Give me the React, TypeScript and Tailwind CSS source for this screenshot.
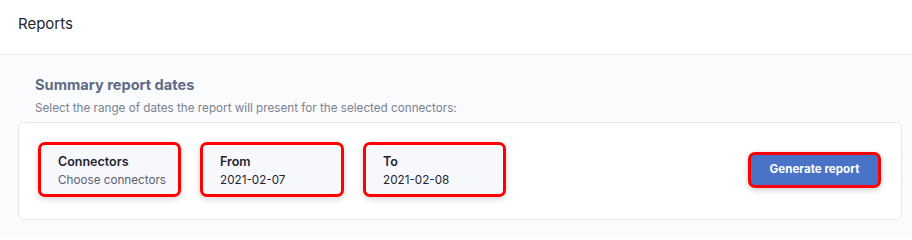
import { useState } from 'react';

const fields = [
  { label: 'Connectors', value: 'Choose connectors', muted: true, width: 'w-[143px]' },
  { label: 'From', value: '2021-02-07', muted: false, width: 'w-[144px]' },
  { label: 'To', value: '2021-02-08', muted: false, width: 'w-[143px]' },
];

export default function App() {
  const [fromDate] = useState('2021-02-07');

  return (
    <div className="min-h-[237px] w-full bg-[#fafbfd] font-['Inter',sans-serif]">
      {/* Header */}
      <div className="h-[55px] border-b border-[#e8eaee] bg-white px-[18px] flex items-center">
        <span className="text-[15px] text-[#1f2430] -mt-[6px]">Reports</span>
      </div>

      <div className="pl-[18px] pr-[10px] pt-[20px]">
        <h2 className="pl-[17px] text-[14.6px] font-bold leading-[20px] text-[#5f6a85]">Summary report dates</h2>
        <p className="pl-[17px] mt-[5px] text-[11.7px] leading-[16px] text-[#7c8290]">
          Select the range of dates the report will present for the selected connectors:
        </p>

        {/* Card */}
        <div className="mt-[6px] h-[98px] rounded-md border border-[#e4e7ec] bg-white pl-[19px] pr-[20px] pt-[19px] flex items-start justify-between">
          <div className="flex gap-[19px]">
            {fields.map((f) => (
              <div
                key={f.label}
                className={`${f.width} h-[55px] rounded-[7px] border-[3px] border-[#ff0000] bg-[#f6f8fc] pl-[17px] pt-[7px] whitespace-nowrap shadow-[0_2px_6px_rgba(0,0,0,0.18)]`}
              >
                <div className="text-[12.5px] font-semibold leading-[19px] text-[#1f2430]">{f.label}</div>
                <div className={`text-[11.7px] leading-[19px] ${f.muted ? 'text-[#5c6273]' : 'text-[#1f2430]'}`}>
                  {f.label === 'From' ? fromDate : f.value}
                </div>
              </div>
            ))}
          </div>

          <button className="mt-[10px] h-[36px] w-[133px] rounded-[7px] border-[3px] border-[#ff0000] bg-[#4a72c6] text-[11.6px] font-bold text-white shadow-[0_2px_6px_rgba(0,0,0,0.2)]">
            Generate report
          </button>
        </div>
      </div>
    </div>
  );
}
